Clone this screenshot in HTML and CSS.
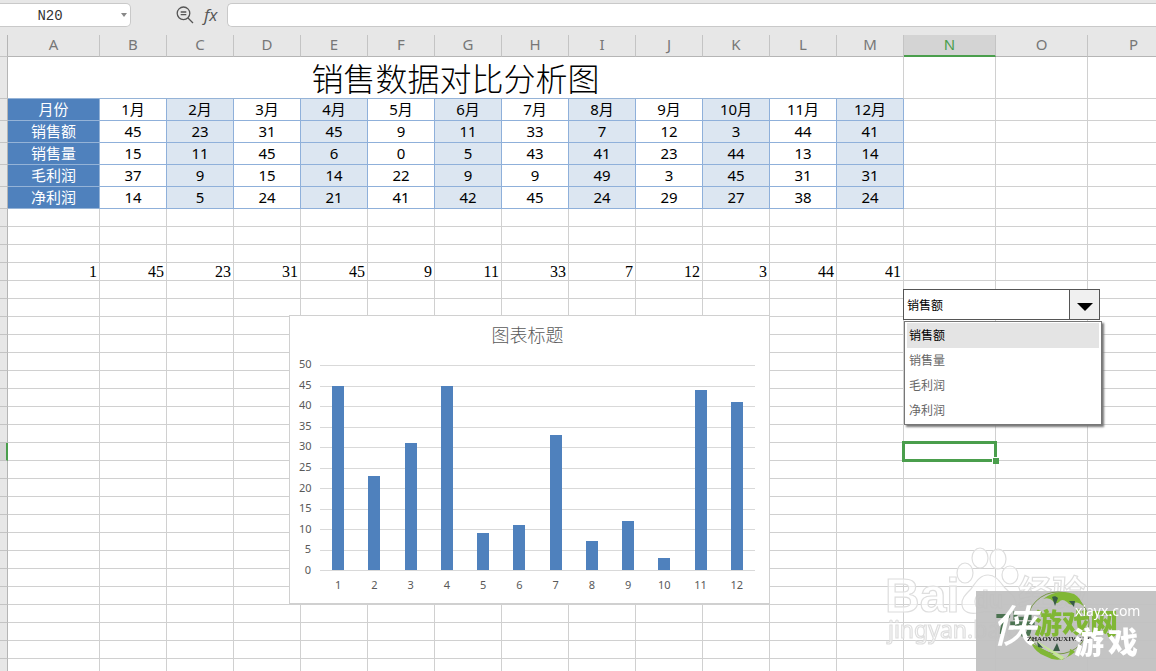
FILE: index.html
```html
<!DOCTYPE html>
<html lang="zh-CN">
<head>
<meta charset="utf-8">
<title>销售数据对比分析图</title>
<link rel="stylesheet" href="styles.css">
</head>
<body>
<div class="app">
  <header class="formula-bar">
    <div class="name-box">
      <input class="name-input" type="text" value="N20" aria-label="名称框">
      <button class="name-toggle" type="button" aria-label="展开名称"></button>
    </div>
    <div class="tools">
      <button class="tool" type="button" aria-label="缩放">
        <svg width="18" height="18" viewBox="0 0 18 18" fill="none" stroke="#555" stroke-width="1.3">
          <circle cx="7.5" cy="7.3" r="6.3"/><path d="M12 12l5 5M4.7 6h5.6M4.7 8.7h5.6"/>
        </svg>
      </button>
      <button class="tool fx" type="button" aria-label="插入函数">fx</button>
    </div>
    <input class="formula-input" type="text" aria-label="编辑栏">
  </header>

  <main class="sheet">
    <table class="grid" id="grid">
      <colgroup id="cols"></colgroup>
      <thead id="head"></thead>
      <tbody id="body"></tbody>
    </table>

    <section class="chart" aria-label="图表">
      <h2 class="chart-title">图表标题</h2>
      <div class="chart-body">
        <div class="axis-y" id="axisY"></div>
        <div class="plot">
          <div class="lines" id="lines"></div>
          <div class="bars" id="bars"></div>
        </div>
        <div class="axis-x" id="axisX"></div>
      </div>
    </section>

    <div class="combo">
      <div class="combo-field">
        <select class="combo-select" aria-label="指标">
          <option>销售额</option><option>销售量</option><option>毛利润</option><option>净利润</option>
        </select>
        <span class="combo-arrow"><svg width="16" height="8" viewBox="0 0 16 8"><path d="M0 0h16l-8 8z" fill="#000"/></svg></span>
      </div>
      <ul class="combo-list" role="listbox" aria-label="指标选项">
        <li class="combo-item active" role="option" aria-selected="true">销售额</li>
        <li class="combo-item" role="option">销售量</li>
        <li class="combo-item" role="option">毛利润</li>
        <li class="combo-item" role="option">净利润</li>
      </ul>
    </div>
  </main>
</div>

<svg class="watermark" width="280" height="131" viewBox="0 0 280 131" aria-hidden="true">
  <g fill="#fff" fill-opacity=".6" stroke="#dedede" stroke-width="1.2">
    <ellipse cx="89" cy="33" rx="8" ry="10"/>
    <ellipse cx="104" cy="18" rx="8" ry="10"/>
    <ellipse cx="122" cy="19" rx="8" ry="10"/>
    <ellipse cx="134" cy="35" rx="8" ry="9"/>
    <path d="M112 35c-8 0-12 7-17 14-6 6-10 10-9 16 1 8 9 9 16 8 7-2 13-2 20 0 8 1 17 0 18-8 1-7-6-12-11-17-5-6-9-13-17-13z"/>
    <text class="wm-bai" x="9" y="72">Bai</text>
    <text class="wm-du" x="98" y="68">du</text>
    <text class="wm-cjk" x="142" y="65">经验</text>
    <text class="wm-url" x="12" y="98">jingyan.baidu.com</text>
  </g>
  <rect x="100" y="51" width="180" height="80" fill="#c0c0c0" fill-opacity=".94"/>
  <circle cx="182" cy="83" r="31" fill="none" stroke="#779647"/>
  <path d="M167 59q14-11 31-5q6 3 9 12q-5-5-9-3q-3 4-7-1q-5-4-8 0q-3 3-6-1q-4-4-10-2z" fill="#80b735"/>
  <path d="M155 103q15 7 31 17q8-3 8-11q4 1 5 3q-15 13-30 4q-9-3-14-13z" fill="#80b735"/>
  <path d="M176 57c2-1 4-1 6 1l-3 8zM193 61l5 6 1-6zM161 101l1 6 5 1zM181 103l-4 8h7z" fill="#385b46"/>
  <text class="wm-seven" x="119" y="94">7</text>
  <text class="wm-seven" x="133" y="94">号</text>
  <text class="wm-site" x="158" y="94">游戏网</text>
  <text class="wm-xia" x="116" y="102">侠</text>
  <path d="M157 99l31 18-2 3z" fill="#c5e795"/>
  <text class="wm-pinyin" x="151" y="101">ZHAOYOUXIWANG</text>
  <text class="wm-game" x="198" y="113">游</text>
  <text class="wm-game" x="232" y="113">戏</text>
  <text class="wm-domain" x="199" y="76">xiayx.com</text>
</svg>
<script src="app.js"></script>
</body>
</html>
```
FILE: styles.css
```css
* { box-sizing: border-box; }

body {
  margin: 0;
  overflow: hidden;
  font-family: "Noto Sans", "Noto Sans CJK SC", sans-serif;
  color: #000;
  background: #fff;
}

button, input, select { font: inherit; color: inherit; }

.app { display: flex; flex-direction: column; height: 100vh; }

/* formula bar */
.formula-bar {
  flex: none;
  display: flex;
  align-items: center;
  height: 35px;
  padding-bottom: 5px;
  background: #e7e7e7;
}
.name-box {
  display: flex;
  align-items: center;
  width: 131px;
  height: 24px;
  padding-right: 2px;
  background: #fff;
  border: 1px solid #c9c9c9;
  border-left: 0;
  border-radius: 0 5px 5px 0;
}
.name-input {
  flex: 1;
  min-width: 0;
  padding: 2px 10px 0 0;
  border: 0;
  outline: 0;
  background: none;
  text-align: center;
  font: 14px "Liberation Mono", monospace;
  color: #333;
}
.name-toggle {
  width: 18px;
  height: 20px;
  padding: 0 1px 0 0;
  border: 0;
  background: none;
  display: flex;
  align-items: center;
  justify-content: flex-end;
}
.name-toggle::before {
  content: "";
  border: 3px solid transparent;
  border-top: 4px solid #888;
  border-bottom: 0;
}
.tools { display: flex; gap: 10px; width: 96px; padding-left: 45px; align-items: center; }
.tool { display: flex; padding: 0; border: 0; background: none; }
.fx { font: italic 17px/20px "Open Sans", sans-serif; color: #555; }
.formula-input {
  flex: 1;
  height: 24px;
  border: 1px solid #c9c9c9;
  border-right: 0;
  border-radius: 5px 0 0 5px;
  background: #fff;
  outline: 0;
}

/* sheet */
.sheet { position: relative; flex: 1; min-height: 0; overflow: hidden; }
.grid { table-layout: fixed; width: 1180px; border-collapse: separate; border-spacing: 0; }
.col-stub { width: 8px; }
.col-wide { width: 92px; }
.col-month { width: 67px; }

.grid th, .grid td {
  padding: 0;
  overflow: hidden;
  white-space: nowrap;
  font-weight: 400;
  border-right: 1px solid #d0d0d0;
  border-bottom: 1px solid #d0d0d0;
}
.grid thead th {
  height: 22px;
  background: #e7e7e7;
  border-right-color: #c4c4c4;
  border-bottom-color: #b5b5b5;
  font-size: 15px;
  line-height: 18px;
  vertical-align: top;
  color: #777;
}
.grid thead th.col-active {
  background: #d4d4d4;
  border-bottom: 2px solid #4a9e4c;
  color: #4a9e4c;
}
.grid .stub { background: #e7e7e7; border-right-color: #b5b5b5; border-bottom-color: #c4c4c4; }
.grid .stub.row-active { background: #d4d4d4; border-right: 2px solid #4a9e4c; }

.row-title td { height: 42px; }
.grid .title {
  overflow: visible;
  font-family: "Noto Sans CJK SC", sans-serif;
  font-weight: 300;
  font-size: 32px;
  line-height: 41px;
  text-align: center;
  border-bottom-color: #95b3d7;
}
.row-data td, .row-data th { height: 22px; font-size: 15px; line-height: 21px; }
.grid .row-data .cell { text-align: center; border-color: #8fb0da; }
.grid .row-data .label { background: #4f81bd; color: #fff; border-color: #95b3d7; }
.grid .row-data .shade { background: #dce6f1; }
.row-plain td { height: 18px; font-family: "Liberation Serif", serif; font-size: 16px; line-height: 16px; text-align: right; }
.grid .row-plain .value { padding: 1px 2px 0 0; overflow: visible; }
.grid .row-plain .selected { position: relative; overflow: visible; }
.selected::before {
  content: "";
  position: absolute;
  inset: -2px;
  border: 3px solid #4a9e4c;
}
.selected::after {
  content: "";
  position: absolute;
  right: -4px;
  bottom: -4px;
  width: 6px;
  height: 6px;
  background: #4a9e4c;
  border: solid #fff;
  border-width: 1px 0 0 1px;
}

/* chart */
.chart {
  position: absolute;
  left: 289px;
  top: 280px;
  width: 481px;
  padding: 6px 14px 0 10px;
  background: #fff;
  border: 1px solid #d0d0d0;
}
.chart-title {
  margin: 0;
  font: 300 18px/24px "Noto Sans CJK SC", sans-serif;
  color: #595959;
  text-align: center;
}
.chart-body {
  display: grid;
  grid-template-columns: 12px 1fr;
  grid-template-rows: 206px auto;
  column-gap: 8px;
  padding-top: 19px;
  font: 11px/14px "Noto Sans", sans-serif;
  color: #595959;
}
.axis-y { display: flex; flex-direction: column; justify-content: space-between; margin: -8px 1px -6px -1px; text-align: right; }
.plot { display: grid; }
.lines, .bars { grid-area: 1 / 1; display: flex; }
.lines { flex-direction: column; justify-content: space-between; }
.line { height: 1px; background: #d9d9d9; }
.bars { align-items: flex-end; padding-bottom: 1px; }
.slot { flex: 1; height: 100%; display: flex; align-items: flex-end; justify-content: center; }
.bar { width: 12px; background: #4f81bd; }
.axis-x { grid-column: 2; display: flex; padding: 7px 0 11px; text-align: center; }
.axis-x span { flex: 1; }

/* combo box */
.combo {
  position: absolute;
  left: 903px;
  top: 254px;
  width: 199px;
  font: 12px/18px "Noto Sans CJK SC", sans-serif;
}
.combo-field { display: flex; width: 197px; height: 31px; border: 1px solid #555; background: #fff; }
.combo-select { flex: 1; appearance: none; border: 0; padding: 0 3px; background: none; outline: 0; }
.combo-arrow { display: flex; align-items: center; justify-content: center; width: 30px; padding-top: 4px; border-left: 1px solid #555; background: #f0f0f0; }
.combo-list {
  margin: 1px 0 0 1px;
  padding: 1px 2px;
  list-style: none;
  background: #fff;
  border: 1px solid #777;
  box-shadow: 2px 2px 2px #777;
}
.combo-item { height: 25px; padding-left: 2px; line-height: 23px; color: #666; }
.combo-item.active { background: #e4e4e4; color: #000; }

/* corner marks */
.watermark { position: fixed; right: 0; bottom: 0; }
.wm-bai { font: 700 48px "Liberation Sans", sans-serif; }
.wm-du { font: 700 24px "Liberation Sans", sans-serif; }
.wm-cjk { font: 700 34px "Noto Sans CJK SC", sans-serif; }
.wm-url { font: 23px "Noto Sans", sans-serif; }
.wm-seven { font: 900 27px "Noto Sans CJK SC", sans-serif; fill: #4b7351; }
.wm-site { font: 900 28px "Noto Sans CJK SC", sans-serif; fill: #80b735; }
.wm-pinyin { font: 700 7px "Liberation Serif", serif; fill: #222; }
.wm-xia { font: italic 500 44px "Noto Sans CJK SC", sans-serif; fill: #fff; }
.wm-game { font: 900 30px "Noto Sans CJK SC", sans-serif; fill: #fff; }
.wm-domain { font: 14px "Noto Sans", sans-serif; fill: #fff; }
```
FILE: app.js
```js
const letters = 'ABCDEFGHIJKLMNOP'.split('');
const data = [
  ['月份', '1月', '2月', '3月', '4月', '5月', '6月', '7月', '8月', '9月', '10月', '11月', '12月'],
  ['销售额', 45, 23, 31, 45, 9, 11, 33, 7, 12, 3, 44, 41],
  ['销售量', 15, 11, 45, 6, 0, 5, 43, 41, 23, 44, 13, 14],
  ['毛利润', 37, 9, 15, 14, 22, 9, 9, 49, 3, 45, 31, 31],
  ['净利润', 14, 5, 24, 21, 41, 42, 45, 24, 29, 27, 38, 24]
];
const selectedRow = 20;
const picked = [1].concat(data[1].slice(1));
const put = (id, html) => { document.getElementById(id).innerHTML = html; };

put('cols', '<col class="col-stub">' + letters.map((l, i) =>
  `<col class="${i > 0 && i < 13 ? 'col-month' : 'col-wide'}">`).join(''));
put('head', '<tr><th class="stub"></th>' + letters.map(l =>
  `<th scope="col"${l === 'N' ? ' class="col-active"' : ''}>${l}</th>`).join('') + '</tr>');

const blank = '<td></td>'.repeat(3);
let rows = '<tr class="row-title"><td class="stub"></td><td class="title" colspan="13">销售数据对比分析图</td>' + blank + '</tr>';
data.forEach(r => {
  rows += '<tr class="row-data"><td class="stub"></td>' + r.map((v, i) => i === 0
    ? `<th scope="row" class="cell label">${v}</th>`
    : `<td class="cell${i % 2 === 0 ? ' shade' : ''}">${v}</td>`).join('') + blank + '</tr>';
});
for (let n = 7; n <= 60; n++) {
  rows += `<tr class="row-plain"><td class="stub${n === selectedRow ? ' row-active' : ''}"></td>` + letters.map((l, i) => {
    if (n === 10 && i < 13) return `<td class="value">${picked[i]}</td>`;
    if (n === selectedRow && l === 'N') return '<td class="selected"></td>';
    return '<td></td>';
  }).join('') + '</tr>';
}
put('body', rows);

const ticks = [50, 45, 40, 35, 30, 25, 20, 15, 10, 5, 0];
const series = data[1].slice(1);
put('axisY', ticks.map(t => `<span>${t}</span>`).join(''));
put('lines', ticks.map(() => '<div class="line"></div>').join(''));
put('bars', series.map(v => `<div class="slot"><div class="bar" style="height:${v * 2}%"></div></div>`).join(''));
put('axisX', series.map((v, i) => `<span>${i + 1}</span>`).join(''));
```
